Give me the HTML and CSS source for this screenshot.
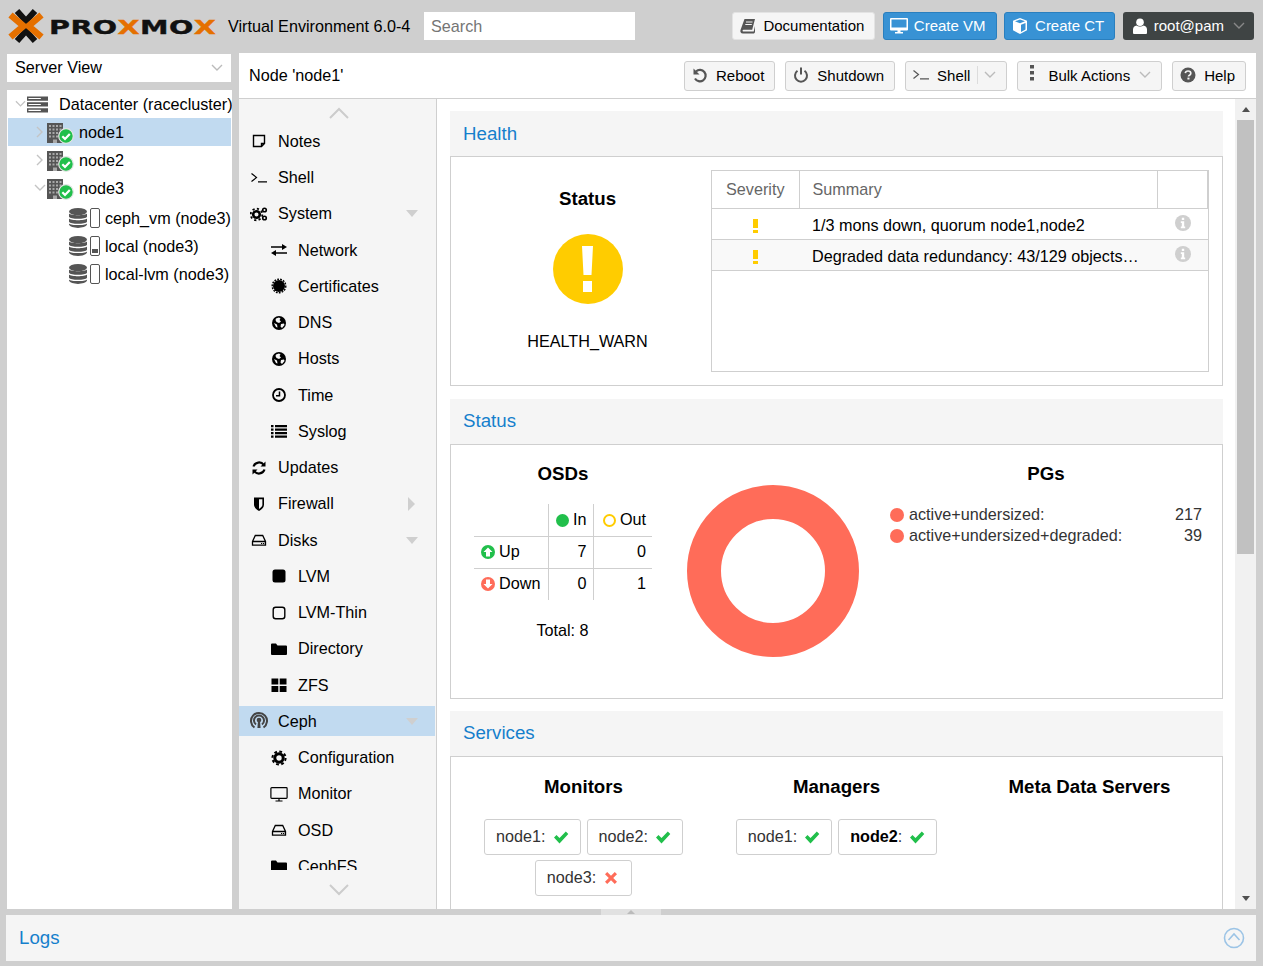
FILE: index.html
```html
<!DOCTYPE html>
<html lang="en">
<head>
  <meta charset="UTF-8">
  <title>node1 - Proxmox Virtual Environment</title>
  <link rel="stylesheet" href="styles.css">
</head>
<body>
  <!-- icon sprite -->
  <svg class="sprite" xmlns="http://www.w3.org/2000/svg">
    <symbol id="i-note" viewBox="0 0 16 16"><path d="M2.500 2.500h11v8l-3 3h-8zM10.500 13.500v-3h3" fill="none" stroke="currentColor" stroke-width="1.400"/></symbol>
    <symbol id="i-shell" viewBox="0 0 16 16"><path d="M.5 3.500l5 4-5 4M7 11.800h9" fill="none" stroke="currentColor" stroke-width="1.200"/></symbol>
    <symbol id="i-gears" viewBox="0 0 18 16"><circle cx="6.500" cy="8.500" r="3.300" fill="none" stroke="currentColor" stroke-width="2.600"/><circle cx="6.500" cy="8.500" r="5.800" fill="none" stroke="currentColor" stroke-width="1.800" stroke-dasharray="2.200 2.300"/><circle cx="14.500" cy="4" r="1.800" fill="none" stroke="currentColor" stroke-width="1.600"/><circle cx="14.500" cy="12" r="1.800" fill="none" stroke="currentColor" stroke-width="1.600"/></symbol>
    <symbol id="i-exchange" viewBox="0 0 16 16"><path d="M0 4.200h11V2l5 3-5 3V5.800H0zM16 10.200H5V8l-5 3 5 3v-2.200h11z"/></symbol>
    <symbol id="i-cert" viewBox="0 0 16 16"><circle cx="8" cy="8" r="6"/><circle cx="8" cy="8" r="6.800" fill="none" stroke="currentColor" stroke-width="1.400" stroke-dasharray="1.800 1.200"/></symbol>
    <symbol id="i-globe" viewBox="0 0 16 16"><circle cx="8" cy="8" r="7"/><path d="M5 3.500l3-1 1.500 1-1 1.500 1.500 1.500-2 1.500-2.500-1-1-2zM10 9l3-.5.500 1.500-2.500 3-1.500-1.500zM3 8l3 1.500.500 3-1.500-.5z" fill="#f5f5f5"/></symbol>
    <symbol id="i-clock" viewBox="0 0 16 16"><circle cx="8" cy="8" r="6" fill="none" stroke="currentColor" stroke-width="1.800"/><path d="M8.500 4.500v4.200H5" fill="none" stroke="currentColor" stroke-width="1.500"/></symbol>
    <symbol id="i-list" viewBox="0 0 16 16"><path d="M0 2h2.500v2.200H0zM4 2h12v2.200H4zM0 5.500h2.500v2.200H0zM4 5.500h12v2.200H4zM0 9h2.500v2.200H0zM4 9h12v2.200H4zM0 12.500h2.500v2.200H0zM4 12.500h12v2.200H4z"/></symbol>
    <symbol id="i-refresh" viewBox="0 0 16 16"><path d="M2.500 6.500A5.800 5.800 0 0 1 12.800 5M13.500 9.500A5.800 5.800 0 0 1 3.200 11" fill="none" stroke="currentColor" stroke-width="2.200"/><path d="M14.500 1.500v5h-5zM1.500 14.500v-5h5z"/></symbol>
    <symbol id="i-shield" viewBox="0 0 16 16"><path d="M3 1.500h10v7c0 3-2.500 5-5 6.500-2.500-1.500-5-3.500-5-6.500z"/><path d="M8 3.200h3.400v5.300c0 2-1.700 3.400-3.400 4.500z" fill="#f5f5f5"/></symbol>
    <symbol id="i-hdd" viewBox="0 0 16 16"><path d="M1.500 9.500l2.800-6h7.400l2.800 6v3.700h-13zM1.500 9.500h13" fill="none" stroke="currentColor" stroke-width="1.300"/><path d="M10 11h1.200v1H10zM12 11h1.200v1H12z"/></symbol>
    <symbol id="i-square" viewBox="0 0 16 16"><rect x="1.500" y="1.500" width="13" height="13" rx="2.500"/></symbol>
    <symbol id="i-square-o" viewBox="0 0 16 16"><rect x="2.200" y="2.200" width="11.600" height="11.600" rx="2.500" fill="none" stroke="currentColor" stroke-width="1.400"/></symbol>
    <symbol id="i-folder" viewBox="0 0 16 16"><path d="M0 3.500a1 1 0 0 1 1-1h4l1.500 2H15a1 1 0 0 1 1 1V13a1 1 0 0 1-1 1H1a1 1 0 0 1-1-1z"/></symbol>
    <symbol id="i-grid" viewBox="0 0 16 16"><path d="M.5 1.500h6.800v6H.5zM8.700 1.500h6.800v6H8.700zM.5 8.900h6.800v6H.5zM8.700 8.900h6.800v6H8.700z"/></symbol>
    <symbol id="i-ceph" viewBox="0 0 18 18"><path d="M4.500 16.500A8 8 0 1 1 13.500 16.500" fill="none" stroke="currentColor" stroke-width="2"/><path d="M6 13.500A5 5 0 1 1 12 13.500" fill="none" stroke="currentColor" stroke-width="2"/><circle cx="9" cy="9" r="2.300"/><path d="M8 10h2l.6 7H7.400z"/></symbol>
    <symbol id="i-cog" viewBox="0 0 16 16"><circle cx="8" cy="8" r="4.200" fill="none" stroke="currentColor" stroke-width="3"/><circle cx="8" cy="8" r="6.600" fill="none" stroke="currentColor" stroke-width="2" stroke-dasharray="2.800 2.400"/></symbol>
    <symbol id="i-desktop" viewBox="0 0 18 16"><path d="M1.700 1.700h14.600a.8.8 0 0 1 .8.8v9a.8.800 0 0 1-.8.800H1.700a.8.8 0 0 1-.8-.8v-9a.8.8 0 0 1 .8-.8zM9 12.500v2.300M5.500 15h7" fill="none" stroke="currentColor" stroke-width="1.200"/></symbol>
    <symbol id="i-desktop-fill" viewBox="0 0 18 16"><path d="M1 0h16a1 1 0 0 1 1 1v10.500a1 1 0 0 1-1 1h-6.500v1.500H13v1.500H5V14h2.500v-1.500H1a1 1 0 0 1-1-1V1a1 1 0 0 1 1-1z"/><path d="M1.500 1.500h15v8h-15z" fill="#3892d4"/></symbol>
    <symbol id="i-cube" viewBox="0 0 16 16"><path d="M8 0l7 2.700v9.600L8 16l-7-3.700V2.700zM3 3.300L8 5.200l5-1.900L8 1.600zM9 14l4.500-2.400V5L9 6.800z" fill-rule="evenodd"/></symbol>
    <symbol id="i-user" viewBox="0 0 14 16"><circle cx="7" cy="4.200" r="3.800"/><path d="M0 15v-3.500C0 9.500 1.500 7.800 3.500 7.500c1 .8 2.200 1.100 3.500 1.100s2.500-.3 3.500-1.100c2 .3 3.500 2 3.500 4V15a1 1 0 0 1-1 1H1a1 1 0 0 1-1-1z"/></symbol>
    <symbol id="i-book" viewBox="0 0 16 16"><path d="M4.500 1H15l-2.800 10.800H3.500c-1 0-1.300 1.700-.3 1.700h10.500L15 8v6.200L14 15.500H3C.5 15.500 0 13.500.5 12z"/><path d="M6 4h6.500M5.300 6.500h6.500" stroke="#f5f5f5" stroke-width="1"/></symbol>
    <symbol id="i-undo" viewBox="0 0 16 16"><path d="M4 4.500A5.700 5.700 0 1 1 3 11.500" fill="none" stroke="currentColor" stroke-width="2.200"/><path d="M1.500 1.500v6h6z"/></symbol>
    <symbol id="i-power" viewBox="0 0 16 16"><path d="M4.500 3.800a6 6 0 1 0 7 0" fill="none" stroke="currentColor" stroke-width="2"/><path d="M8 .5v7" stroke="currentColor" stroke-width="2"/></symbol>
    <symbol id="i-dots" viewBox="0 0 6 16"><path d="M1 0h4v3.600H1zM1 6h4v3.600H1zM1 12h4v3.600H1z"/></symbol>
    <symbol id="i-question" viewBox="0 0 16 16"><circle cx="8" cy="8" r="7.500"/><path d="M5.300 6.200C5.500 4.700 6.600 4 8 4c1.600 0 2.800.9 2.800 2.300 0 2-2.300 1.900-2.300 3.300" fill="none" stroke="#f5f5f5" stroke-width="1.700"/><path d="M7.400 10.600h2.100v1.900H7.400z" fill="#f5f5f5"/></symbol>
    <symbol id="i-info" viewBox="0 0 16 16"><circle cx="8" cy="8" r="8"/><path d="M6.800 2.800h2.400v2.200H6.800zM5.800 6.300h3.400v5.200h1v1.700H5.800v-1.700h1V8H5.800z" fill="#fff"/></symbol>
    <symbol id="i-server" viewBox="0 0 22 17"><path d="M0 0h22v4.500H0zM0 6.200h22v4.500H0zM0 12.400h22v4.500H0z"/><path d="M1.500 1.700h13v1.100h-13zM1.500 7.900h13V9h-13zM1.500 14.100h13v1.100h-13z" fill="#fff"/></symbol>
    <symbol id="i-node" viewBox="0 0 16 20"><path d="M0 0h16v20H0z"/><path d="M2 2h2v2H2zM5.500 2h2v2h-2zM9 2h2v2H9zM12.500 2h2v2h-2zM2 5.500h2v2H2zM5.500 5.500h2v2h-2zM9 5.500h2v2H9zM12.500 5.500h2v2h-2zM2 9h2v2H2zM5.500 9h2v2h-2zM9 9h2v2H9zM2 12.500h2v2H2zM5.500 12.500h2v2h-2zM9 12.500h2v2H9zM6 16.500h4V20H6z" fill="#a8a8a8"/></symbol>
    <symbol id="i-ok" viewBox="0 0 16 16"><circle cx="8" cy="8" r="7.300" fill="#21bf4b" stroke="#e4e4e4" stroke-width="1.200"/><path d="M4.300 8.200l2.700 2.700 4.800-5" fill="none" stroke="#fff" stroke-width="2.200"/></symbol>
    <symbol id="i-db" viewBox="0 0 18 20"><ellipse cx="9" cy="3.600" rx="9" ry="3.600"/><path d="M0 5.600C2 7.800 16 7.800 18 5.600v3.200c-1.500 2.700-16.500 2.700-18 0zM0 10.600c2 2.200 16 2.200 18 0v3.200c-1.500 2.700-16.500 2.700-18 0zM0 15.400c2 2.200 16 2.200 18 0v1.200c-1.500 4.400-16.500 4.400-18 0z"/></symbol>
    <symbol id="i-arrow-up" viewBox="0 0 14 14"><circle cx="7" cy="7" r="7" fill="#21bf4b"/><path d="M7 2.500L11.500 7H9v4.500H5V7H2.500z" fill="#fff"/></symbol>
    <symbol id="i-arrow-down" viewBox="0 0 14 14"><circle cx="7" cy="7" r="7" fill="#ff6c59"/><path d="M7 11.500L2.500 7H5V2.500h4V7h2.500z" fill="#fff"/></symbol>
    <symbol id="i-check" viewBox="0 0 16 14"><path d="M1 7.500l2.500-2.500 3 3L12.800 1.500 15.300 4l-8.800 9.500z"/></symbol>
    <symbol id="i-times" viewBox="0 0 14 14"><path d="M3.200 1L7 4.800 10.800 1 13 3.200 9.200 7 13 10.800 10.800 13 7 9.200 3.200 13 1 10.800 4.800 7 1 3.200z"/></symbol>
    <symbol id="i-down" viewBox="0 0 12 8"><path d="M1 1l5 5 5-5" fill="none" stroke="currentColor" stroke-width="1.400"/></symbol>
  </svg>

  <header class="topbar">
    <div class="logo">
      <svg class="logo-mark" viewBox="8 9 36 34">
        <path d="M17 11l9 10 9-10M17 41l9-10 9 10" fill="none" stroke="#111" stroke-width="6"/>
        <path d="M10.500 15l13 11-13 11M41.500 15l-13 11 13 11" fill="none" stroke="#e57000" stroke-width="6.500"/>
      </svg>
      <span class="logo-text">PRO<b>X</b>MO<b>X</b></span>
    </div>
    <span class="version">Virtual Environment 6.0-4</span>
    <input class="search" type="text" placeholder="Search">
    <div class="top-actions">
      <a href="#" class="top-btn doc"><svg class="ico dark"><use href="#i-book"/></svg>Documentation</a>
      <a href="#" class="top-btn blue"><svg class="ico wide"><use href="#i-desktop-fill"/></svg>Create VM</a>
      <a href="#" class="top-btn blue"><svg class="ico"><use href="#i-cube"/></svg>Create CT</a>
      <a href="#" class="top-btn user"><svg class="ico"><use href="#i-user"/></svg>root@pam<svg class="caret"><use href="#i-down"/></svg></a>
    </div>
  </header>

  <main class="main">
    <aside class="side">
      <div class="view-select">Server View<svg class="caret"><use href="#i-down"/></svg></div>
      <ul class="tree">
        <li class="tree-row dc"><svg class="caret"><use href="#i-down"/></svg><svg class="tree-server"><use href="#i-server"/></svg>Datacenter (racecluster)</li>
        <li class="tree-row node selected"><svg class="caret closed"><use href="#i-down"/></svg><span class="node-ico"><svg class="tree-node"><use href="#i-node"/></svg><svg class="badge"><use href="#i-ok"/></svg></span>node1</li>
        <li class="tree-row node"><svg class="caret closed"><use href="#i-down"/></svg><span class="node-ico"><svg class="tree-node"><use href="#i-node"/></svg><svg class="badge"><use href="#i-ok"/></svg></span>node2</li>
        <li class="tree-row node"><svg class="caret"><use href="#i-down"/></svg><span class="node-ico"><svg class="tree-node"><use href="#i-node"/></svg><svg class="badge"><use href="#i-ok"/></svg></span>node3</li>
        <li class="tree-row store first"><svg class="tree-db"><use href="#i-db"/></svg><span class="usage"></span>ceph_vm (node3)</li>
        <li class="tree-row store"><svg class="tree-db"><use href="#i-db"/></svg><span class="usage some"></span>local (node3)</li>
        <li class="tree-row store"><svg class="tree-db"><use href="#i-db"/></svg><span class="usage"></span>local-lvm (node3)</li>
      </ul>
    </aside>

    <section class="node-panel">
      <div class="toolbar">
        <span class="node-title">Node 'node1'</span>
        <div class="tools">
          <a href="#" class="tool"><svg class="ico"><use href="#i-undo"/></svg>Reboot</a>
          <a href="#" class="tool"><svg class="ico"><use href="#i-power"/></svg>Shutdown</a>
          <a href="#" class="tool split"><svg class="ico"><use href="#i-shell"/></svg>Shell<span class="sep"></span><svg class="caret"><use href="#i-down"/></svg></a>
          <a href="#" class="tool"><svg class="ico dots"><use href="#i-dots"/></svg>Bulk Actions<svg class="caret"><use href="#i-down"/></svg></a>
          <a href="#" class="tool"><svg class="ico"><use href="#i-question"/></svg>Help</a>
        </div>
      </div>

      <div class="node-body">
        <nav class="menu">
          <div class="menu-arrow"><svg viewBox="0 0 20 12"><path d="M1 11l9-9 9 9" fill="none" stroke="#ccc" stroke-width="2"/></svg></div>
          <ul class="menu-list">
            <li class="menu-item"><svg class="ico"><use href="#i-note"/></svg>Notes</li>
            <li class="menu-item"><svg class="ico"><use href="#i-shell"/></svg>Shell</li>
            <li class="menu-item"><svg class="ico wide"><use href="#i-gears"/></svg>System<span class="tri down"></span></li>
            <li class="menu-item sub"><svg class="ico"><use href="#i-exchange"/></svg>Network</li>
            <li class="menu-item sub"><svg class="ico"><use href="#i-cert"/></svg>Certificates</li>
            <li class="menu-item sub"><svg class="ico"><use href="#i-globe"/></svg>DNS</li>
            <li class="menu-item sub"><svg class="ico"><use href="#i-globe"/></svg>Hosts</li>
            <li class="menu-item sub"><svg class="ico"><use href="#i-clock"/></svg>Time</li>
            <li class="menu-item sub"><svg class="ico"><use href="#i-list"/></svg>Syslog</li>
            <li class="menu-item"><svg class="ico"><use href="#i-refresh"/></svg>Updates</li>
            <li class="menu-item"><svg class="ico"><use href="#i-shield"/></svg>Firewall<span class="tri right"></span></li>
            <li class="menu-item"><svg class="ico"><use href="#i-hdd"/></svg>Disks<span class="tri down"></span></li>
            <li class="menu-item sub"><svg class="ico"><use href="#i-square"/></svg>LVM</li>
            <li class="menu-item sub"><svg class="ico"><use href="#i-square-o"/></svg>LVM-Thin</li>
            <li class="menu-item sub"><svg class="ico"><use href="#i-folder"/></svg>Directory</li>
            <li class="menu-item sub"><svg class="ico"><use href="#i-grid"/></svg>ZFS</li>
            <li class="menu-item active"><svg class="ico ceph"><use href="#i-ceph"/></svg>Ceph<span class="tri down"></span></li>
            <li class="menu-item sub"><svg class="ico"><use href="#i-cog"/></svg>Configuration</li>
            <li class="menu-item sub"><svg class="ico wide"><use href="#i-desktop"/></svg>Monitor</li>
            <li class="menu-item sub"><svg class="ico"><use href="#i-hdd"/></svg>OSD</li>
            <li class="menu-item sub"><svg class="ico"><use href="#i-folder"/></svg>CephFS</li>
          </ul>
          <div class="menu-arrow"><svg viewBox="0 0 20 12"><path d="M1 1l9 9 9-9" fill="none" stroke="#ccc" stroke-width="2"/></svg></div>
        </nav>

        <div class="content">
          <div class="panel">
            <h2 class="panel-head">Health</h2>
            <div class="panel-body health">
              <div class="health-state">
                <h3>Status</h3>
                <svg class="warn-big" viewBox="0 0 70 70"><circle cx="35" cy="35" r="35" fill="#fc0"/><path d="M29 12h11l-1.500 29h-8zM30 47h9v11h-9z" fill="#fff"/></svg>
                <span>HEALTH_WARN</span>
              </div>
              <div class="grid-box">
                <table class="health-table">
                  <thead><tr><th class="c-sev">Severity</th><th class="c-sum">Summary</th><th class="c-act"></th></tr></thead>
                  <tbody>
                    <tr><td class="c-sev"><span class="bang"></span></td><td class="c-sum">1/3 mons down, quorum node1,node2</td><td class="c-act"><svg class="info"><use href="#i-info"/></svg></td></tr>
                    <tr class="alt"><td class="c-sev"><span class="bang"></span></td><td class="c-sum">Degraded data redundancy: 43/129 objects…</td><td class="c-act"><svg class="info"><use href="#i-info"/></svg></td></tr>
                  </tbody>
                </table>
              </div>
            </div>
          </div>

          <div class="panel">
            <h2 class="panel-head">Status</h2>
            <div class="panel-body osd-status">
              <div class="osds">
                <h3>OSDs</h3>
                <table class="osd-table">
                  <tr><td></td><td class="num"><span class="dot in"></span>In</td><td class="num"><span class="dot out"></span>Out</td></tr>
                  <tr><td><svg class="state"><use href="#i-arrow-up"/></svg>Up</td><td class="num">7</td><td class="num">0</td></tr>
                  <tr><td><svg class="state"><use href="#i-arrow-down"/></svg>Down</td><td class="num">0</td><td class="num">1</td></tr>
                </table>
                <p class="total">Total: 8</p>
              </div>
              <svg class="donut" viewBox="0 0 172 172"><circle cx="86" cy="86" r="69" fill="none" stroke="#ff6c59" stroke-width="34"/></svg>
              <div class="pgs">
                <h3>PGs</h3>
                <div class="pg-row"><span class="pg-dot"></span>active+undersized:<span class="pg-num">217</span></div>
                <div class="pg-row"><span class="pg-dot"></span>active+undersized+degraded:<span class="pg-num">39</span></div>
              </div>
            </div>
          </div>

          <div class="panel">
            <h2 class="panel-head">Services</h2>
            <div class="panel-body services">
              <div class="service">
                <h3>Monitors</h3>
                <div class="chips">
                  <span class="chip">node1:<svg class="chip-ico ok"><use href="#i-check"/></svg></span>
                  <span class="chip">node2:<svg class="chip-ico ok"><use href="#i-check"/></svg></span>
                  <span class="chip">node3:<svg class="chip-ico bad"><use href="#i-times"/></svg></span>
                </div>
              </div>
              <div class="service">
                <h3>Managers</h3>
                <div class="chips">
                  <span class="chip">node1:<svg class="chip-ico ok"><use href="#i-check"/></svg></span>
                  <span class="chip"><b>node2</b>:<svg class="chip-ico ok"><use href="#i-check"/></svg></span>
                </div>
              </div>
              <div class="service">
                <h3>Meta Data Servers</h3>
              </div>
            </div>
          </div>
        </div>

        <div class="scrollbar">
          <span class="sb-arrow up"></span>
          <div class="sb-track"><div class="sb-thumb"></div></div>
          <span class="sb-arrow down"></span>
        </div>
      </div>
    </section>
  </main>

  <footer class="logs">
    <div class="split-tab"><span></span></div>
    <span class="logs-title">Logs</span>
    <svg class="logs-toggle" viewBox="0 0 22 22"><circle cx="11" cy="11" r="9.500" fill="none" stroke="#9cc4e6" stroke-width="1.600"/><path d="M5.500 13L11 7l5.500 6" fill="none" stroke="#9cc4e6" stroke-width="1.600"/></svg>
  </footer>
</body>
</html>
```

FILE: styles.css
```css
*{
  box-sizing: border-box;
  margin: 0;
  padding: 0;
}
html, body{
  height: 100%;
  overflow: hidden;
}
body{
  display: flex;
  flex-direction: column;
  background-color: #cfcfcf;
  color: #000;
  font-family: "Liberation Sans", Arial, sans-serif;
  font-size: 16.2px;
}
a{
  color: inherit;
  text-decoration: none;
}
ul{
  list-style: none;
}
.sprite{
  display: none;
}
svg{
  fill: currentColor;
  flex: none;
}
.caret{
  width: 12px;
  height: 8px;
  color: #bbb;
}

/* top bar */
.topbar{
  height: 53px;
  flex: none;
  display: flex;
  align-items: center;
  padding: 0 9px 1px 8px;
}
.logo{
  display: flex;
  align-items: center;
  width: 220px;
}
.logo-mark{
  width: 36px;
  height: 34px;
}
.logo-text{
  margin: 2px 0 0 5px;
  font-family: "DejaVu Sans", sans-serif;
  font-weight: 700;
  font-size: 20px;
  letter-spacing: 0.3px;
  color: #111;
  -webkit-text-stroke: 0.4px currentColor;
  transform: scaleX(1.43);
  transform-origin: left center;
}
.logo-text b{
  color: #e57000;
}
.version{
  width: 196px;
}
.search{
  width: 211px;
  height: 28px;
  border: none;
  outline: none;
  padding: 0 7px;
  font: inherit;
}
.search::placeholder{
  color: #757575;
}
.top-actions{
  margin-left: auto;
  display: flex;
  gap: 7.5px;
  font-size: 15px;
}
.top-btn{
  height: 28px;
  display: flex;
  align-items: center;
  padding: 0 10px 1px 7px;
  border-radius: 3px;
  border: 1px solid transparent;
}
.top-btn.doc{
  background-color: #f5f5f5;
  border-color: #e3e3e3;
}
.top-btn.blue{
  background-color: #3892d4;
  border-color: #2a7fbe;
  color: #fff;
}
.top-btn.user{
  background-color: #3f4444;
  color: #fff;
  padding-right: 8px;
}
.top-btn .ico{
  width: 16px;
  height: 16px;
  margin-right: 7px;
}
.top-btn .ico.wide{
  width: 18px;
  margin: 0 6px 0 -1px;
}
.top-btn .ico.dark{
  color: #555;
}
.top-btn.user .ico{
  width: 14px;
  margin: 0 7px 0 2px;
}
.top-btn .caret{
  margin-left: 9px;
  color: #888;
}

/* main area */
.main{
  flex: 1;
  min-height: 0;
  display: flex;
  gap: 7px;
  padding: 0 7px;
}
.side{
  width: 225px;
  flex: none;
  display: flex;
  flex-direction: column;
}
.view-select{
  height: 28px;
  margin: 1px 1px 0 0;
  background-color: #fff;
  display: flex;
  align-items: center;
  justify-content: space-between;
  padding: 0 8px 1px;
}
.tree{
  flex: 1;
  margin-top: 8px;
  padding: 0 1px;
  background-color: #fff;
  overflow: hidden;
  white-space: nowrap;
}
.tree-row{
  height: 28px;
  display: flex;
  align-items: center;
}
.tree-row .caret{
  color: #c4c4c4;
}
.tree-row.dc{
  padding-left: 7px;
}
.tree-row.dc .caret{
  margin-right: 1px;
  width: 11px;
}
.tree-server{
  width: 21px;
  height: 17px;
  margin-right: 11px;
  color: #555;
}
.tree-row.node{
  padding-left: 26px;
}
.tree-row.selected{
  background-color: #c1daf0;
}
.caret.closed{
  transform: rotate(-90deg);
}
.tree-row.node .caret{
  width: 12px;
  margin-right: 1px;
}
.node-ico{
  position: relative;
  width: 32px;
  height: 20px;
  margin-top: 1px;
  flex: none;
}
.tree-node{
  width: 16px;
  height: 20px;
  color: #555;
  display: block;
}
.badge{
  position: absolute;
  left: 11px;
  top: 5px;
  width: 16px;
  height: 16px;
}
.tree-row.store{
  padding-left: 61px;
}
.tree-row.store.first{
  margin-top: 2px;
}
.tree-db{
  width: 18px;
  height: 20px;
  color: #555;
  margin-right: 3px;
}
.usage{
  width: 10px;
  height: 20px;
  border: 1px solid #555;
  border-radius: 2px;
  margin-right: 5px;
  flex: none;
  display: flex;
  align-items: flex-end;
  justify-content: center;
  padding-bottom: 2px;
}
.usage.some::after{
  content: '';
  width: 6px;
  height: 4px;
  background-color: #555;
}

.node-panel{
  flex: 1;
  min-width: 0;
  display: flex;
  flex-direction: column;
}
.toolbar{
  height: 46px;
  flex: none;
  background-color: #fff;
  border-bottom: 1px solid #cfcfcf;
  display: flex;
  align-items: center;
  justify-content: space-between;
  padding: 0 10px 0 10px;
}
.tools{
  display: flex;
  gap: 10px;
  font-size: 15px;
}
.tool{
  height: 30px;
  display: flex;
  align-items: center;
  padding: 0 10px 1px 7px;
  background-color: #f5f5f5;
  border: 1px solid #cfcfcf;
  border-radius: 3px;
}
.tool .ico{
  width: 16px;
  height: 16px;
  color: #555;
  margin-right: 8px;
}
.tool .ico.dots{
  width: 6px;
  margin: 0 13px 4px 4px;
}
.tool .caret{
  margin-left: 9px;
}
.sep{
  width: 1px;
  height: 18px;
  background-color: #dcdcdc;
  margin-left: 7px;
  margin-right: -3px;
}

.node-body{
  flex: 1;
  min-height: 0;
  display: flex;
}

/* left menu */
.menu{
  width: 198px;
  flex: none;
  display: flex;
  flex-direction: column;
  background-color: #f5f5f5;
  border-right: 1px solid #cfcfcf;
}
.menu-arrow{
  height: 27px;
  flex: none;
  display: flex;
  justify-content: center;
  align-items: center;
  padding-left: 2px;
}
.menu-arrow svg{
  width: 20px;
  height: 12px;
}
.menu-arrow:last-child{
  height: 39px;
}
.menu-list{
  flex: 1;
  min-height: 0;
  overflow: hidden;
  padding: 0.4px 1px 0 0;
}
.menu-item{
  height: 30px;
  margin-bottom: 6.25px;
  display: flex;
  align-items: center;
  padding-left: 12px;
}
.menu-item .ico{
  width: 16px;
  height: 16px;
  margin-right: 11px;
}
.menu-item .ico.wide{
  width: 18px;
  margin: 0 10px 0 -1px;
}
.menu-item .ico.ceph{
  width: 18px;
  height: 18px;
  margin: 0 10px 2px -1px;
  color: #444;
}
.menu-item.sub{
  padding-left: 32px;
}
.menu-item.active{
  background-color: #c1daf0;
}
.tri{
  margin-left: auto;
  width: 0;
  height: 0;
}
.tri.down{
  margin-right: 17px;
  border-left: 6.5px solid transparent;
  border-right: 6.5px solid transparent;
  border-top: 7px solid #cfcfcf;
}
.tri.right{
  margin-right: 20px;
  border-top: 7px solid transparent;
  border-bottom: 7px solid transparent;
  border-left: 7px solid #cfcfcf;
}

/* content column */
.content{
  flex: 1;
  min-width: 0;
  overflow: hidden;
  background-color: #fff;
  padding: 12px 12px 0 13px;
}
.panel{
  margin-bottom: 13px;
}
.panel + .panel{
  margin-bottom: 12px;
}
.panel-head{
  height: 45px;
  display: flex;
  align-items: center;
  padding: 0 0 1px 13px;
  background-color: #f5f5f5;
  color: #157fcc;
  font-size: 18.7px;
  font-weight: 400;
}
.panel:first-child .panel-head{
  padding-bottom: 0;
}
.panel-body{
  border: 1px solid #cfcfcf;
}
.panel-body h3{
  font-size: 18.7px;
  line-height: 22px;
}

.health{
  height: 230px;
  display: flex;
  padding: 13px;
}
.health-state{
  width: 247px;
  display: flex;
  flex-direction: column;
  align-items: center;
  padding-top: 18px;
}
.warn-big{
  width: 70px;
  height: 70px;
  margin: 24px 0 28px;
}
.health-state span{
  line-height: 18px;
}
.grid-box{
  flex: 1;
  border: 1px solid #cfcfcf;
  min-width: 0;
}
.health-table{
  width: 100%;
  table-layout: fixed;
  border-collapse: collapse;
}
.health-table th{
  height: 37px;
  padding-left: 13px;
  font-weight: 400;
  color: #666;
  text-align: left;
  border-bottom: 1px solid #cfcfcf;
  border-right: 1px solid #cfcfcf;
}
.health-table th.c-sev{
  padding-left: 14px;
}
.health-table td{
  height: 31px;
  border-bottom: 1px solid #cfcfcf;
}
.c-sev{
  width: 87px;
}
.c-act{
  width: 50px;
}
td.c-sum{
  padding: 4px 4px 0 13px;
  white-space: nowrap;
  overflow: hidden;
}
td.c-sev{
  text-align: center;
  padding-top: 2px;
}
td.c-act{
  text-align: center;
  vertical-align: top;
  padding-top: 6px;
}
tr.alt{
  background-color: #f9f9f9;
}
.bang{
  display: inline-block;
  width: 5px;
  height: 14px;
  background: linear-gradient(#fc0 0 9px, transparent 9px 11px, #fc0 11px);
  vertical-align: middle;
}
.info{
  width: 16px;
  height: 16px;
  color: #cfcfcf;
}

.osd-status{
  height: 255px;
  display: flex;
  align-items: flex-start;
  padding: 18px 0 0 23px;
}
.osds{
  width: 178px;
  flex: none;
  text-align: center;
}
.osds h3{
  margin-bottom: 19px;
}
.osd-table{
  width: 178px;
  border-collapse: collapse;
}
.osd-table td{
  height: 32px;
  text-align: left;
  padding-left: 7px;
  border-right: 1px solid #cfcfcf;
  border-bottom: 1px solid #cfcfcf;
}
.osd-table tr + tr td{
  padding-bottom: 1px;
}
.osd-table td:first-child{
  width: 74px;
}
.osd-table td:nth-child(2){
  width: 45px;
}
.osd-table td:last-child{
  border-right: none;
}
.osd-table tr:last-child td{
  border-bottom: none;
}
.osd-table td.num{
  text-align: right;
  padding-right: 6px;
  padding-left: 0;
}
.dot{
  display: inline-block;
  width: 13px;
  height: 13px;
  border-radius: 50%;
  margin-right: 4px;
  vertical-align: -2px;
}
.dot.in{
  background-color: #21bf4b;
}
.dot.out{
  border: 2px solid #fc0;
}
.state{
  width: 14px;
  height: 14px;
  margin-right: 4px;
  vertical-align: -2px;
}
.total{
  margin-top: 21px;
  padding-right: 1px;
}
.donut{
  width: 172px;
  height: 172px;
  margin: 22px 0 0 35px;
}
.pgs{
  width: 312px;
  margin-left: 31px;
}
.pgs h3{
  text-align: center;
  margin-bottom: 19px;
}
.pg-row{
  display: flex;
  align-items: center;
  height: 21px;
  color: #333;
}
.pg-dot{
  width: 14px;
  height: 14px;
  border-radius: 50%;
  background-color: #ff6c59;
  margin-right: 5px;
}
.pg-num{
  margin-left: auto;
}

.services{
  display: flex;
  padding: 19px 6px 12px;
  border-bottom: none;
}
.service{
  flex: 1;
  text-align: center;
  min-height: 200px;
}
.service h3{
  margin-bottom: 21px;
}
.chips{
  display: flex;
  flex-wrap: wrap;
  justify-content: center;
  gap: 5px 6px;
}
.chip{
  height: 36px;
  display: inline-flex;
  align-items: center;
  padding: 0 11px 1px;
  border: 1px solid #cfcfcf;
  border-radius: 3px;
  color: #333;
}
.chip b{
  color: #000;
}
.chip-ico{
  width: 16px;
  height: 14px;
  margin-left: 7px;
}
.chip-ico.ok{
  color: #21bf4b;
}
.chip-ico.bad{
  width: 14px;
  margin: 0 2px 0 8px;
  color: #ff6c59;
}

.scrollbar{
  width: 21px;
  flex: none;
  background-color: #f1f1f1;
  display: flex;
  flex-direction: column;
  align-items: center;
}
.sb-arrow{
  height: 21px;
  flex: none;
  display: flex;
  align-items: center;
}
.sb-arrow::after{
  content: '';
  border-left: 4px solid transparent;
  border-right: 4px solid transparent;
}
.sb-arrow.up::after{
  border-bottom: 5px solid #505050;
}
.sb-arrow.down::after{
  border-top: 5px solid #505050;
}
.sb-track{
  flex: 1;
  width: 100%;
}
.sb-thumb{
  height: 434px;
  background-color: #c1c1c1;
  margin: 0 2px;
}

/* bottom logs panel */
.logs{
  position: relative;
  height: 46px;
  flex: none;
  margin: 6px 7px 5px 6px;
  display: flex;
  align-items: center;
  justify-content: space-between;
  padding: 0 11px 0 13px;
  background-color: #f5f5f5;
}
.logs-title{
  color: #157fcc;
  font-size: 18.7px;
}
.logs-toggle{
  width: 22px;
  height: 22px;
}
.split-tab{
  position: absolute;
  left: 595px;
  top: -6px;
  width: 60px;
  height: 6px;
  background-color: #e1e1e1;
  display: flex;
  justify-content: center;
}
.split-tab span{
  margin-top: 1px;
  width: 0;
  height: 0;
  border-left: 4px solid transparent;
  border-right: 4px solid transparent;
  border-bottom: 4px solid #bbb;
}
```
